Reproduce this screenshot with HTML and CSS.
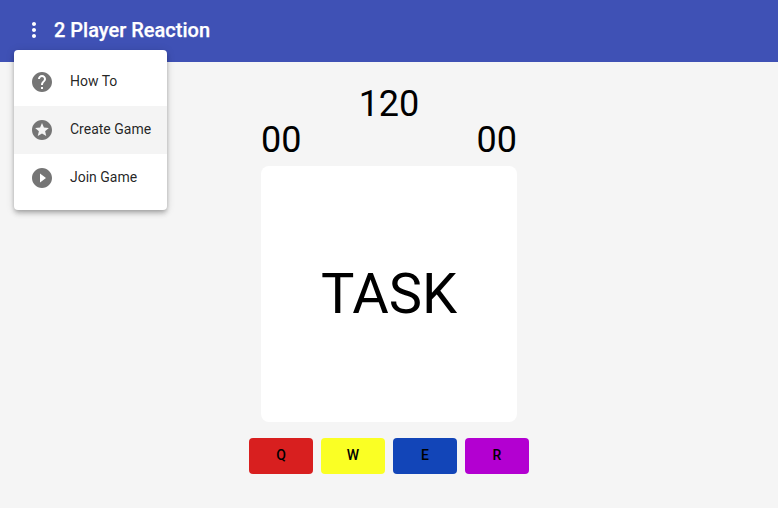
FILE: index.html
```html
<!DOCTYPE html>
<html lang="en">
<head>
<meta charset="utf-8">
<title>2 Player Reaction</title>
<link rel="stylesheet" href="styles.css">
</head>
<body>
<header class="toolbar">
  <button class="menu-button" aria-label="Menu">
    <svg viewBox="0 0 24 24"><path d="M12 8c1.1 0 2-.9 2-2s-.9-2-2-2-2 .9-2 2 .9 2 2 2zm0 2c-1.100 0-2 .9-2 2s.9 2 2 2 2-.9 2-2-.9-2-2-2zm0 6c-1.100 0-2 .9-2 2s.9 2 2 2 2-.9 2-2-.9-2-2-2z"/></svg>
  </button>
  <h1 class="title">2 Player Reaction</h1>
  <nav class="menu">
    <a class="menu-item"><svg viewBox="0 0 24 24"><path d="M12 2C6.480 2 2 6.480 2 12s4.480 10 10 10 10-4.480 10-10S17.520 2 12 2zm1 17h-2v-2h2v2zm2.070-7.750l-.9.920C13.450 12.900 13 13.500 13 15h-2v-.5c0-1.100.45-2.100 1.170-2.830l1.240-1.260c.37-.36.59-.86.59-1.410 0-1.100-.9-2-2-2s-2 .9-2 2H8c0-2.210 1.790-4 4-4s4 1.790 4 4c0 .88-.36 1.680-.93 2.250z"/></svg><span>How To</span></a>
    <a class="menu-item active"><svg viewBox="0 0 24 24"><path d="M11.990 2C6.470 2 2 6.480 2 12s4.470 10 9.990 10C17.520 22 22 17.520 22 12S17.520 2 11.990 2zm4.240 16L12 15.450 7.770 18l1.120-4.810-3.730-3.230 4.920-.42L12 5l1.920 4.530 4.920.42-3.730 3.230L16.230 18z"/></svg><span>Create Game</span></a>
    <a class="menu-item"><svg viewBox="0 0 24 24"><path d="M12 2C6.480 2 2 6.480 2 12s4.480 10 10 10 10-4.480 10-10S17.520 2 12 2zm-2 14.500v-9l6 4.500-6 4.500z"/></svg><span>Join Game</span></a>
  </nav>
</header>
<main class="game">
  <div class="timer">120</div>
  <div class="scores"><span>00</span><span>00</span></div>
  <section class="task">TASK</section>
  <div class="keys">
    <button class="key red">Q</button>
    <button class="key yellow">W</button>
    <button class="key blue">E</button>
    <button class="key purple">R</button>
  </div>
</main>
</body>
</html>
```
FILE: styles.css
```css
* { box-sizing: border-box; }
body {
  margin: 0;
  min-height: 100vh;
  background: #f5f5f5;
  color: #000;
  font-family: Roboto, sans-serif;
}
.toolbar {
  position: relative;
  display: flex;
  align-items: center;
  height: 62px;
  padding: 0 14px 2px;
  background: #3f51b5;
  color: #fff;
}
.menu-button {
  display: flex;
  align-items: center;
  justify-content: center;
  width: 40px;
  height: 40px;
  padding: 0;
  border: 0;
  background: none;
}
.menu-button svg { width: 24px; height: 24px; fill: #fff; }
.title { margin: 0; font-size: 20px; line-height: 32px; font-weight: 500; -webkit-text-stroke: .25px #fff; }
.menu {
  position: absolute;
  top: 50px;
  left: 14px;
  width: 153px;
  padding: 8px 0;
  border-radius: 4px;
  background: #fff;
  box-shadow: 0 2px 4px -1px rgba(0,0,0,.2), 0 4px 5px rgba(0,0,0,.14), 0 1px 10px rgba(0,0,0,.12);
}
.menu-item {
  display: flex;
  align-items: center;
  height: 48px;
  padding: 0 16px;
  color: rgba(0,0,0,.87);
  font-size: 14px;
  white-space: nowrap;
}
.menu-item span { padding-bottom: 2px; }
.menu-item.active { background: #f4f4f4; }
.menu-item svg { flex: none; width: 24px; height: 24px; margin-right: 16px; fill: #757575; }
.game {
  display: flex;
  flex-direction: column;
  align-items: center;
  padding-top: 24px;
  font-size: 36px;
  line-height: 36px;
}
.scores { display: flex; justify-content: space-between; width: 256px; }
.task {
  display: flex;
  align-items: center;
  justify-content: center;
  width: 256px;
  height: 256px;
  margin: 8px 0 16px;
  border-radius: 8px;
  background: #fff;
  font-size: 56px;
}
.keys { display: flex; gap: 8px; }
.key {
  width: 64px;
  height: 36px;
  padding: 0 0 2px;
  border: 0;
  border-radius: 4px;
  color: #000;
  font: 500 14px Roboto, sans-serif;
}
.red { background: #d81f1f; }
.yellow { background: #faff24; }
.blue { background: #1245b8; }
.purple { background: #b300d1; }
```
